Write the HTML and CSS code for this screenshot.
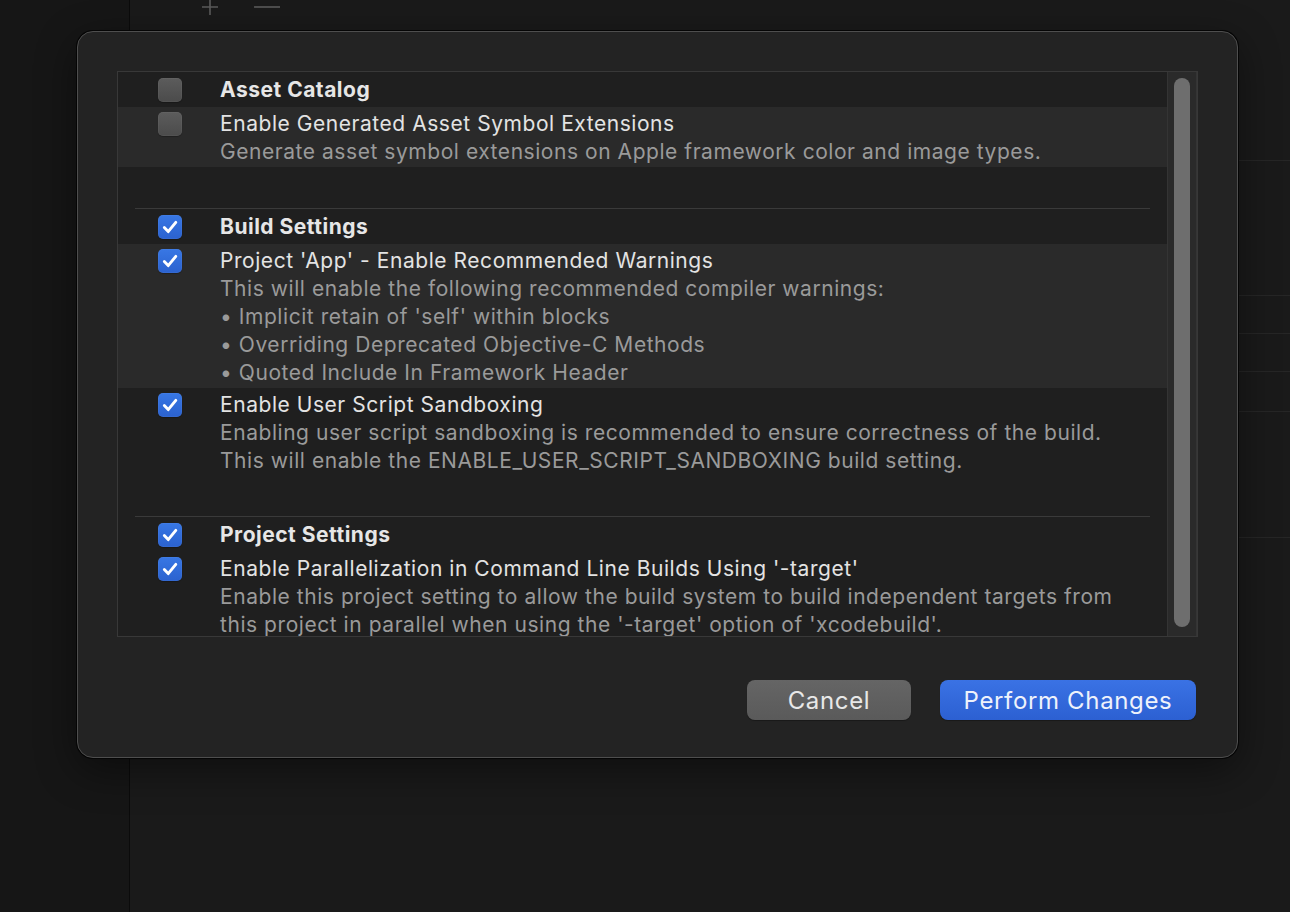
FILE: index.html
```html
<!DOCTYPE html>
<html lang="en">
<head>
<meta charset="utf-8">
<title>Update to recommended settings</title>
<link rel="stylesheet" href="styles.css">
</head>
<body>
<div class="app">
  <aside class="sidebar"></aside>
  <main class="main">
    <div class="toolbar">
      <svg class="tb-plus" width="18" height="18" viewBox="0 0 18 18"><path d="M9 0V16M1 8H17" stroke="#5b5b5b" stroke-width="1.6" fill="none"/></svg>
      <svg class="tb-minus" width="28" height="18" viewBox="0 0 28 18"><path d="M1 8H27" stroke="#5b5b5b" stroke-width="1.6" fill="none"/></svg>
    </div>
    <div class="list">
      <div class="list-row r1"></div>
      <div class="list-row r2"></div>
      <div class="list-row r3"></div>
      <div class="list-row r4"></div>
      <div class="list-row r5"></div>
    </div>
  </main>
</div>

<div class="sheet">
  <div class="table">
    <div class="table-content">
      <div class="group">
        <div class="row header">
          <span class="cb"></span>
          <div class="text"><div class="title">Asset Catalog</div></div>
        </div>
        <div class="row item light">
          <span class="cb"></span>
          <div class="text">
            <div class="title">Enable Generated Asset Symbol Extensions</div>
            <div class="desc">Generate asset symbol extensions on Apple framework color and image types.</div>
          </div>
        </div>
      </div>
      <div class="spacer"></div>
      <div class="separator"></div>
      <div class="group">
        <div class="row header">
          <span class="cb on"><svg viewBox="0 0 24 24"><path d="M6.3 12.6L10.2 16.6L17.8 7.4" /></svg></span>
          <div class="text"><div class="title">Build Settings</div></div>
        </div>
        <div class="row item light">
          <span class="cb on"><svg viewBox="0 0 24 24"><path d="M6.3 12.6L10.2 16.6L17.8 7.4" /></svg></span>
          <div class="text">
            <div class="title">Project 'App' - Enable Recommended Warnings</div>
            <div class="desc">This will enable the following recommended compiler warnings:</div>
            <div class="desc">• Implicit retain of 'self' within blocks</div>
            <div class="desc">• Overriding Deprecated Objective-C Methods</div>
            <div class="desc">• Quoted Include In Framework Header</div>
          </div>
        </div>
        <div class="row item">
          <span class="cb on"><svg viewBox="0 0 24 24"><path d="M6.3 12.6L10.2 16.6L17.8 7.4" /></svg></span>
          <div class="text">
            <div class="title">Enable User Script Sandboxing</div>
            <div class="desc">Enabling user script sandboxing is recommended to ensure correctness of the build.</div>
            <div class="desc">This will enable the ENABLE_USER_SCRIPT_SANDBOXING build setting.</div>
          </div>
        </div>
      </div>
      <div class="spacer tight"></div>
      <div class="separator"></div>
      <div class="group">
        <div class="row header">
          <span class="cb on"><svg viewBox="0 0 24 24"><path d="M6.3 12.6L10.2 16.6L17.8 7.4" /></svg></span>
          <div class="text"><div class="title">Project Settings</div></div>
        </div>
        <div class="row item">
          <span class="cb on"><svg viewBox="0 0 24 24"><path d="M6.3 12.6L10.2 16.6L17.8 7.4" /></svg></span>
          <div class="text">
            <div class="title">Enable Parallelization in Command Line Builds Using '-target'</div>
            <div class="desc">Enable this project setting to allow the build system to build independent targets from</div>
            <div class="desc">this project in parallel when using the '-target' option of 'xcodebuild'.</div>
          </div>
        </div>
      </div>
    </div>
    <div class="scrollbar"><div class="thumb"></div></div>
  </div>
  <div class="buttons">
    <button class="btn cancel">Cancel</button>
    <button class="btn primary">Perform Changes</button>
  </div>
</div>
</body>
</html>
```

FILE: styles.css
```css
* { box-sizing: border-box; }

html, body {
  margin: 0;
  padding: 0;
}

body {
  width: 1290px;
  height: 912px;
  overflow: hidden;
  background: #1a1a1a;
  font-family: Inter, "Noto Sans", "Liberation Sans", sans-serif;
  position: relative;
}

.app {
  display: flex;
  height: 912px;
}

.sidebar {
  width: 130px;
  background: #161616;
  border-right: 1px solid #0b0b0b;
}

.main {
  flex: 1;
  background: #1a1a1a;
}

.toolbar {
  height: 20px;
  display: flex;
  align-items: flex-start;
  padding-left: 71px;
  margin-top: -1px;
}

.tb-minus {
  margin-left: 34px;
}

.list {
  padding-top: 141px;
}

.list-row {
  border-top: 1px solid #262626;
}
.r1 { height: 135px; }
.r2 { height: 38px; }
.r3 { height: 38px; }
.r4 { height: 40px; }
.r5 { height: 127px; border-bottom: 1px solid #262626; }

/* Sheet overlay */
.sheet {
  position: absolute;
  left: 77px;
  top: 31px;
  width: 1161px;
  height: 727px;
  background: #232323;
  border: 1px solid #4e4e4e;
  border-radius: 16px;
  box-shadow: 0 0 0 1px #050505, 0 12px 40px rgba(0, 0, 0, 0.45);
  padding: 39px 40px 37px 39px;
  display: flex;
  flex-direction: column;
}

.table {
  width: 1081px;
  height: 566px;
  border: 1px solid #383838;
  background: #1f1f1f;
  display: flex;
  overflow: hidden;
}

.table-content {
  flex: 1;
  overflow: hidden;
}

.row {
  display: flex;
  align-items: flex-start;
}

.row.header {
  padding: 4px 0 3px;
}

.row.item {
  padding: 3px 0 1px;
}

.row.light {
  background: #2a2a2a;
}

.cb {
  flex: none;
  width: 24px;
  height: 24px;
  margin: 2px 38px 0 40px;
  border-radius: 5px;
  background: linear-gradient(#5c5c5c, #4b4b4b);
  box-shadow: inset 0 0 0 0.5px rgba(255, 255, 255, 0.08), 0 1px 1px rgba(0, 0, 0, 0.25);
  display: flex;
  align-items: center;
  justify-content: center;
}

.cb.on {
  background: linear-gradient(#3877e4, #2b62cf);
}

.cb svg {
  width: 24px;
  height: 24px;
}

.cb svg path {
  fill: none;
  stroke: #ffffff;
  stroke-width: 2.9;
  stroke-linecap: round;
  stroke-linejoin: round;
}

.text {
  font-size: 21px;
  line-height: 28px;
  letter-spacing: 0.55px;
  white-space: nowrap;
}

.title {
  color: #e3e3e3;
}

.header .title {
  font-weight: 700;
  color: #e6e6e6;
  letter-spacing: 0.5px;
}

.desc {
  color: #9a9a9a;
}

.spacer {
  height: 41px;
}

.spacer.tight {
  height: 40px;
}

.separator {
  height: 1px;
  margin: 0 17px;
  background: #3a3a3a;
}

.scrollbar {
  flex: none;
  width: 30px;
  background: #2a2a2a;
  border-left: 1px solid #343434;
  border-right: 1px solid #343434;
  padding: 6px 6px 9px 6px;
}

.thumb {
  width: 16px;
  height: 100%;
  border-radius: 8px;
  background: #6e6e6e;
}

.buttons {
  margin-top: auto;
  display: flex;
  justify-content: flex-end;
  gap: 29px;
  padding-right: 1px;
}

.btn {
  height: 40px;
  border: none;
  border-radius: 8px;
  font-family: Inter, "Noto Sans", "Liberation Sans", sans-serif;
  font-size: 24px;
  letter-spacing: 0.65px;
  color: #e8e8e8;
  padding: 0;
}

.btn.cancel {
  width: 164px;
  background: linear-gradient(#656565, #5a5a5a);
  box-shadow: 0 1px 1px rgba(0, 0, 0, 0.3);
}

.btn.primary {
  width: 256px;
  background: linear-gradient(#3a72e4, #2c60d2);
  box-shadow: 0 1px 1px rgba(0, 0, 0, 0.3);
  color: #eef2fb;
}
```
